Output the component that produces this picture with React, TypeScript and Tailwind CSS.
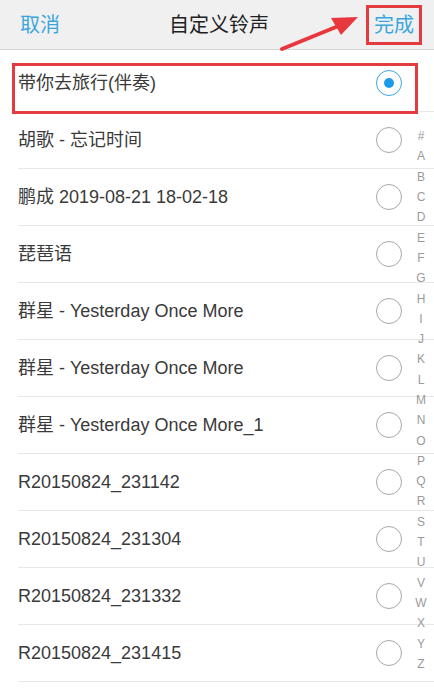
const songs = [
  "带你去旅行(伴奏)",
  "胡歌 - 忘记时间",
  "鹏成 2019-08-21 18-02-18",
  "琵琶语",
  "群星 - Yesterday Once More",
  "群星 - Yesterday Once More",
  "群星 - Yesterday Once More_1",
  "R20150824_231142",
  "R20150824_231304",
  "R20150824_231332",
  "R20150824_231415",
];

const letters = "#ABCDEFGHIJKLMNOPQRSTUVWXYZ".split("");

function Radio({ checked }: { checked: boolean }) {
  if (checked) {
    return (
      <div className="w-[26px] h-[26px] rounded-full border border-[#3aa6dd] flex items-center justify-center">
        <div className="w-[10px] h-[10px] rounded-full bg-[#1e9be8]" />
      </div>
    );
  }
  return <div className="w-[26px] h-[26px] rounded-full border-[1.5px] border-[#a8a8a8]" />;
}

export default function App() {
  return (
    <div
      className="relative w-[434px] h-[691px] overflow-hidden bg-white"
      style={{ fontFamily: '"Liberation Sans", "Noto Sans CJK SC", sans-serif' }}
    >
      {/* header */}
      <div className="h-[50px] bg-[#f0f0f0] border-b border-[#d8d8d8] flex items-center justify-between pl-[20px] pr-[12px]">
        <span className="text-[20px] text-[#3aa6dd]">取消</span>
        <span className="text-[20px] text-[#222] ml-[12px]">自定义铃声</span>
        <span className="border-[3px] border-[#e33b3f] px-[5px] h-[40px] flex items-center text-[20px] text-[#3aa6dd]">
          完成
        </span>
      </div>

      {/* list */}
      <div className="pt-[5px]">
        {songs.map((s, i) => (
          <div
            key={i}
            className="ml-[18px] h-[57px] pr-[32px] border-b border-[#e8e8e8] flex items-center justify-between"
          >
            <span className="text-[18px] text-[#3a3a3a]">{s}</span>
            <Radio checked={i === 0} />
          </div>
        ))}
      </div>

      {/* highlight around first row */}
      <div className="absolute left-[12px] top-[63px] w-[406px] h-[51px] border-[3px] border-[#e33b3f]" />

      {/* arrow */}
      <svg className="absolute left-0 top-0" width="434" height="60" viewBox="0 0 434 60">
        <path d="M282 49 L336 27" stroke="#e8383d" strokeWidth="4" strokeLinecap="round" />
        <path d="M358 17 L331 18 L341 35 Z" fill="#e8383d" />
      </svg>

      {/* index bar */}
      <div className="absolute left-[413px] top-[126px] w-[16px] flex flex-col items-center">
        {letters.map((l) => (
          <div key={l} className="h-[20.3px] flex items-center text-[12px] text-[#9a9a9a]">
            {l}
          </div>
        ))}
      </div>
    </div>
  );
}
